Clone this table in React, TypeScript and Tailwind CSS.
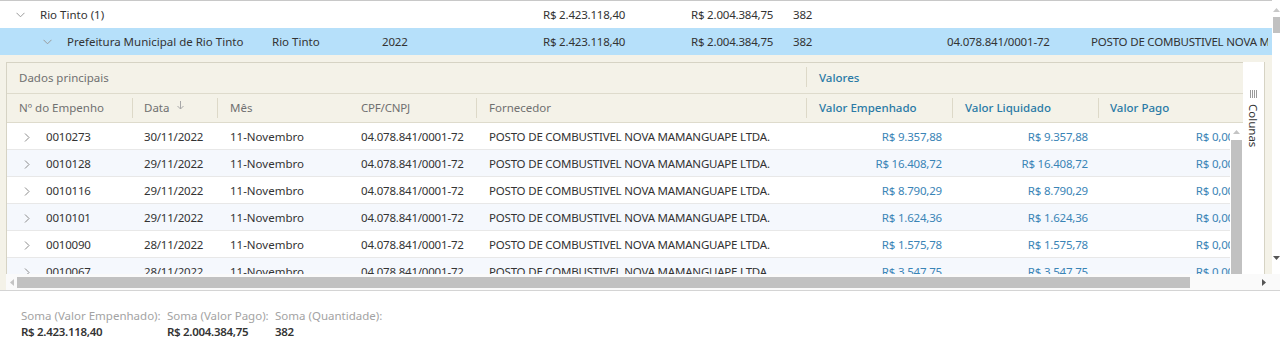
import React from "react";

const rows = [
  { emp: "0010273", data: "30/11/2022", v1: "R$ 9.357,88", v2: "R$ 9.357,88" },
  { emp: "0010128", data: "29/11/2022", v1: "R$ 16.408,72", v2: "R$ 16.408,72" },
  { emp: "0010116", data: "29/11/2022", v1: "R$ 8.790,29", v2: "R$ 8.790,29" },
  { emp: "0010101", data: "29/11/2022", v1: "R$ 1.624,36", v2: "R$ 1.624,36" },
  { emp: "0010090", data: "28/11/2022", v1: "R$ 1.575,78", v2: "R$ 1.575,78" },
  { emp: "0010067", data: "28/11/2022", v1: "R$ 3.547,75", v2: "R$ 3.547,75" },
];

function ChevronDown() {
  return (
    <svg width="9" height="6" viewBox="0 0 9 6" className="shrink-0">
      <polyline points="0.5,0.8 4.5,4.8 8.5,0.8" fill="none" stroke="#9a9a9a" strokeWidth="1" />
    </svg>
  );
}

function ChevronRight() {
  return (
    <svg width="6" height="9" viewBox="0 0 6 9" className="shrink-0">
      <polyline points="1,0.5 5,4.5 1,8.5" fill="none" stroke="#8a8a8a" strokeWidth="1" />
    </svg>
  );
}

function Tri({ dir, color }: { dir: "up" | "down" | "left" | "right"; color: string }) {
  const pts =
    dir === "up" ? "0,4 3.5,0 7,4" : dir === "down" ? "0,0 3.5,4 7,0" : dir === "left" ? "4,0 0,3.5 4,7" : "0,0 4,3.5 0,7";
  const w = dir === "up" || dir === "down" ? 7 : 4;
  const h = dir === "up" || dir === "down" ? 4 : 7;
  return (
    <svg width={w} height={h} viewBox={`0 0 ${w} ${h}`} className="shrink-0">
      <polygon points={pts} fill={color} />
    </svg>
  );
}

function Sep() {
  return <div className="absolute right-0 top-[4px] h-[20px] w-px bg-[#ddd9c8]" />;
}

export default function App() {
  return (
    <div className="w-[1280px] h-[341px] bg-white overflow-hidden text-[11.5px] text-[#333] font-['Noto_Sans',sans-serif] leading-none">
      <div className="h-[291px] flex flex-col border-b border-[#d4d4d4]">
        <div className="flex h-[274px]">
          <div className="w-[1272px] flex flex-col border-t border-[#c8c8c8]">
            {/* group row 1 */}
            <div className="h-[27px] shrink-0 flex items-center">
              <div className="w-[40px] pl-[16px] flex items-center"><ChevronDown /></div>
              <div className="w-[503px]">Rio Tinto (1)</div>
              <div className="w-[148px] tracking-[-0.2px]">R$ 2.423.118,40</div>
              <div className="w-[102px] tracking-[-0.2px]">R$ 2.004.384,75</div>
              <div className="tracking-[-0.2px]">382</div>
            </div>
            {/* group row 2 */}
            <div className="h-[27px] shrink-0 flex items-center bg-[#b6e0fa] overflow-hidden whitespace-nowrap">
              <div className="w-[67px] pl-[43px] flex items-center shrink-0"><ChevronDown /></div>
              <div className="w-[205px] shrink-0">Prefeitura Municipal de Rio Tinto</div>
              <div className="w-[110px] shrink-0">Rio Tinto</div>
              <div className="w-[161px] shrink-0 tracking-[-0.2px]">2022</div>
              <div className="w-[148px] shrink-0 tracking-[-0.2px]">R$ 2.423.118,40</div>
              <div className="w-[102px] shrink-0 tracking-[-0.2px]">R$ 2.004.384,75</div>
              <div className="w-[154px] shrink-0 tracking-[-0.2px]">382</div>
              <div className="w-[144px] shrink-0 tracking-[-0.2px]">04.078.841/0001-72</div>
              <div className="w-[177px] shrink-0 overflow-hidden tracking-[-0.2px]">POSTO DE COMBUSTIVEL NOVA MAMANGUAPE LTDA.</div>
            </div>
            {/* detail area */}
            <div className="flex-1 min-h-0 bg-[#f4f2e8] pt-[7px] pl-[6px] pr-[7px] flex">
              <div className="w-[1237px] flex flex-col border-l border-t border-[#d6d3c4] min-h-0">
                {/* group header */}
                <div className="h-[31px] shrink-0 flex items-center border-b border-[#dedbcc] text-[#707070]">
                  <div className="w-[800px] pl-[12px] relative h-full flex items-center">
                    Dados principais
                    <Sep />
                  </div>
                  <div className="pl-[12px] text-[#2b7aa6] font-medium">Valores</div>
                </div>
                {/* column header */}
                <div className="h-[29px] shrink-0 flex items-center border-b border-[#dedbcc] text-[#707070]">
                  <div className="w-[126px] pl-[12px] relative h-full flex items-center">Nº do Empenho<Sep /></div>
                  <div className="w-[85px] pl-[11px] relative h-full flex items-center gap-[8px]">
                    Data
                    <svg width="7" height="9" viewBox="0 0 7 9" className="mb-[6px]">
                      <line x1="3.5" y1="0" x2="3.5" y2="8" stroke="#a8a8a8" strokeWidth="1" />
                      <polyline points="0.5,5 3.5,8 6.5,5" fill="none" stroke="#a8a8a8" strokeWidth="1" />
                    </svg>
                    <Sep />
                  </div>
                  <div className="w-[131px] pl-[12px] relative h-full flex items-center">Mês</div>
                  <div className="w-[128px] pl-[12px] relative h-full flex items-center tracking-[-0.2px]">CPF/CNPJ<Sep /></div>
                  <div className="w-[330px] pl-[12px] relative h-full flex items-center">Fornecedor<Sep /></div>
                  <div className="w-[146px] pl-[12px] relative h-full flex items-center text-[#2b7aa6] font-medium">Valor Empenhado<Sep /></div>
                  <div className="w-[146px] pl-[12px] relative h-full flex items-center text-[#2b7aa6] font-medium">Valor Liquidado<Sep /></div>
                  <div className="pl-[11px] relative h-full flex items-center text-[#2b7aa6] font-medium">Valor Pago</div>
                </div>
                {/* body */}
                <div className="flex-1 min-h-0 flex">
                  <div className="w-[1223px] overflow-hidden bg-white">
                    {rows.map((r, i) => (
                      <div
                        key={r.emp}
                        className={`h-[27px] flex items-center border-b border-[#e8e8e8] whitespace-nowrap pt-[2px] ${i % 2 === 1 ? "bg-[#f5f8fd]" : "bg-white"}`}
                      >
                        <div className="w-[126px] shrink-0 pl-[17px] flex items-center gap-[16px]">
                          <ChevronRight />
                          <span className="tracking-[-0.2px]">{r.emp}</span>
                        </div>
                        <div className="w-[85px] shrink-0 pl-[11px] tracking-[-0.2px]">{r.data}</div>
                        <div className="w-[131px] shrink-0 pl-[12px]">11-Novembro</div>
                        <div className="w-[128px] shrink-0 pl-[12px] tracking-[-0.2px]">04.078.841/0001-72</div>
                        <div className="w-[330px] shrink-0 pl-[12px] tracking-[-0.2px]">POSTO DE COMBUSTIVEL NOVA MAMANGUAPE LTDA.</div>
                        <div className="w-[146px] shrink-0 pr-[11px] text-right text-[#3a84b6] tracking-[-0.2px]">{r.v1}</div>
                        <div className="w-[146px] shrink-0 pr-[11px] text-right text-[#3a84b6] tracking-[-0.2px]">{r.v2}</div>
                        <div className="w-[146px] shrink-0 pr-[11px] text-right text-[#3a84b6] tracking-[-0.2px]">R$ 0,00</div>
                      </div>
                    ))}
                  </div>
                  {/* inner vscroll */}
                  <div className="w-[13px] bg-white flex flex-col items-center">
                    <div className="h-[17px] flex items-center justify-center"><Tri dir="up" color="#c4c4c4" /></div>
                    <div className="w-[11px] flex-1 bg-[#c1c1c1]" />
                  </div>
                </div>
              </div>
              {/* Colunas panel */}
              <div className="w-[22px] bg-white border-r border-[#d6d3c4] flex flex-col items-center pt-[28px]">
                <svg width="7" height="8" viewBox="0 0 7 8" shapeRendering="crispEdges">
                  <rect x="0" y="0" width="1" height="8" fill="#9a9a9a" />
                  <rect x="2" y="0" width="1" height="8" fill="#9a9a9a" />
                  <rect x="4" y="0" width="1" height="8" fill="#9a9a9a" />
                  <rect x="6" y="0" width="1" height="8" fill="#9a9a9a" />
                </svg>
                <div className="mt-[6px] [writing-mode:vertical-rl] text-[#333]">Colunas</div>
              </div>
            </div>
          </div>
          {/* outer vscroll */}
          <div className="w-[8px] bg-white flex flex-col items-center">
            <div className="h-[17px] flex items-center justify-center pt-[2px]"><Tri dir="up" color="#c8c8c8" /></div>
            <div className="w-[7px] h-[16px] bg-[#c1c1c1]" />
            <div className="flex-1" />
            <div className="h-[20px] flex items-start justify-center pt-[2px]"><Tri dir="down" color="#555" /></div>
          </div>
        </div>
        {/* horizontal scrollbar */}
        <div className="h-[16px] flex">
          <div className="w-[6px] bg-[#f4f2e8]" />
          <div className="flex-1 flex items-center bg-[#fafafa]">
            <div className="w-[11px] flex items-center justify-center"><Tri dir="left" color="#c4c4c4" /></div>
            <div className="w-[1173px] h-[11px] bg-[#c1c1c1]" />
            <div className="w-[72px]" />
            <div className="w-[8px] flex items-center"><Tri dir="right" color="#555" /></div>
          </div>
        </div>
      </div>
      {/* footer */}
      <div className="flex pl-[21px] pt-[19px]">
        <div className="w-[146px] flex flex-col gap-[4px]">
          <span className="text-[#a3a3a3]">Soma (Valor Empenhado):</span>
          <span className="font-semibold text-[#333] tracking-[-0.3px]">R$ 2.423.118,40</span>
        </div>
        <div className="w-[108px] flex flex-col gap-[4px]">
          <span className="text-[#a3a3a3]">Soma (Valor Pago):</span>
          <span className="font-semibold text-[#333] tracking-[-0.3px]">R$ 2.004.384,75</span>
        </div>
        <div className="flex flex-col gap-[4px]">
          <span className="text-[#a3a3a3]">Soma (Quantidade):</span>
          <span className="font-semibold text-[#333] tracking-[-0.3px]">382</span>
        </div>
      </div>
    </div>
  );
}
